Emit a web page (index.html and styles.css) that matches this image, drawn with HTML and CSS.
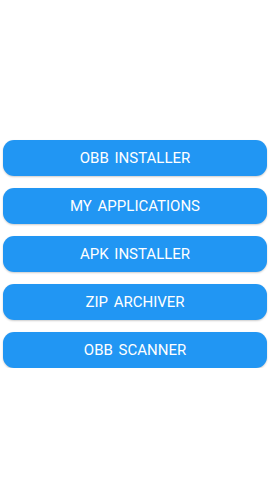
FILE: index.html
```html
<!DOCTYPE html>
<html lang="en">
<head>
    <meta charset="UTF-8">
    <meta name="viewport" content="width=device-width, initial-scale=1.0">
    <title>OBB Tools</title>
    <link rel="stylesheet" href="styles.css">
</head>
<body>

<div class="menu">
    <button class="menu-btn">OBB INSTALLER</button>
    <button class="menu-btn">MY APPLICATIONS</button>
    <button class="menu-btn">APK INSTALLER</button>
    <button class="menu-btn">ZIP ARCHIVER</button>
    <button class="menu-btn">OBB SCANNER</button>
</div>

</body>
</html>
```

FILE: styles.css
```css
* {
    box-sizing: border-box;
}
body {
    font-family: Roboto, 'Noto Sans', sans-serif;
    background: #fff;
    margin: 0;
    padding: 0;
}
.menu {
    display: flex;
    flex-direction: column;
    gap: 12px;
    padding: 140px 3px 0;
}
.menu-btn {
    height: 36px;
    width: 100%;
    border: none;
    border-radius: 11px;
    background-color: #2196f3;
    color: #fff;
    font-family: Roboto, 'Noto Sans', sans-serif;
    font-size: 15px;
    letter-spacing: 0;
    word-spacing: 2px;
    box-shadow: 0 1px 2px rgba(0, 0, 0, 0.2);
    cursor: pointer;
}
```
